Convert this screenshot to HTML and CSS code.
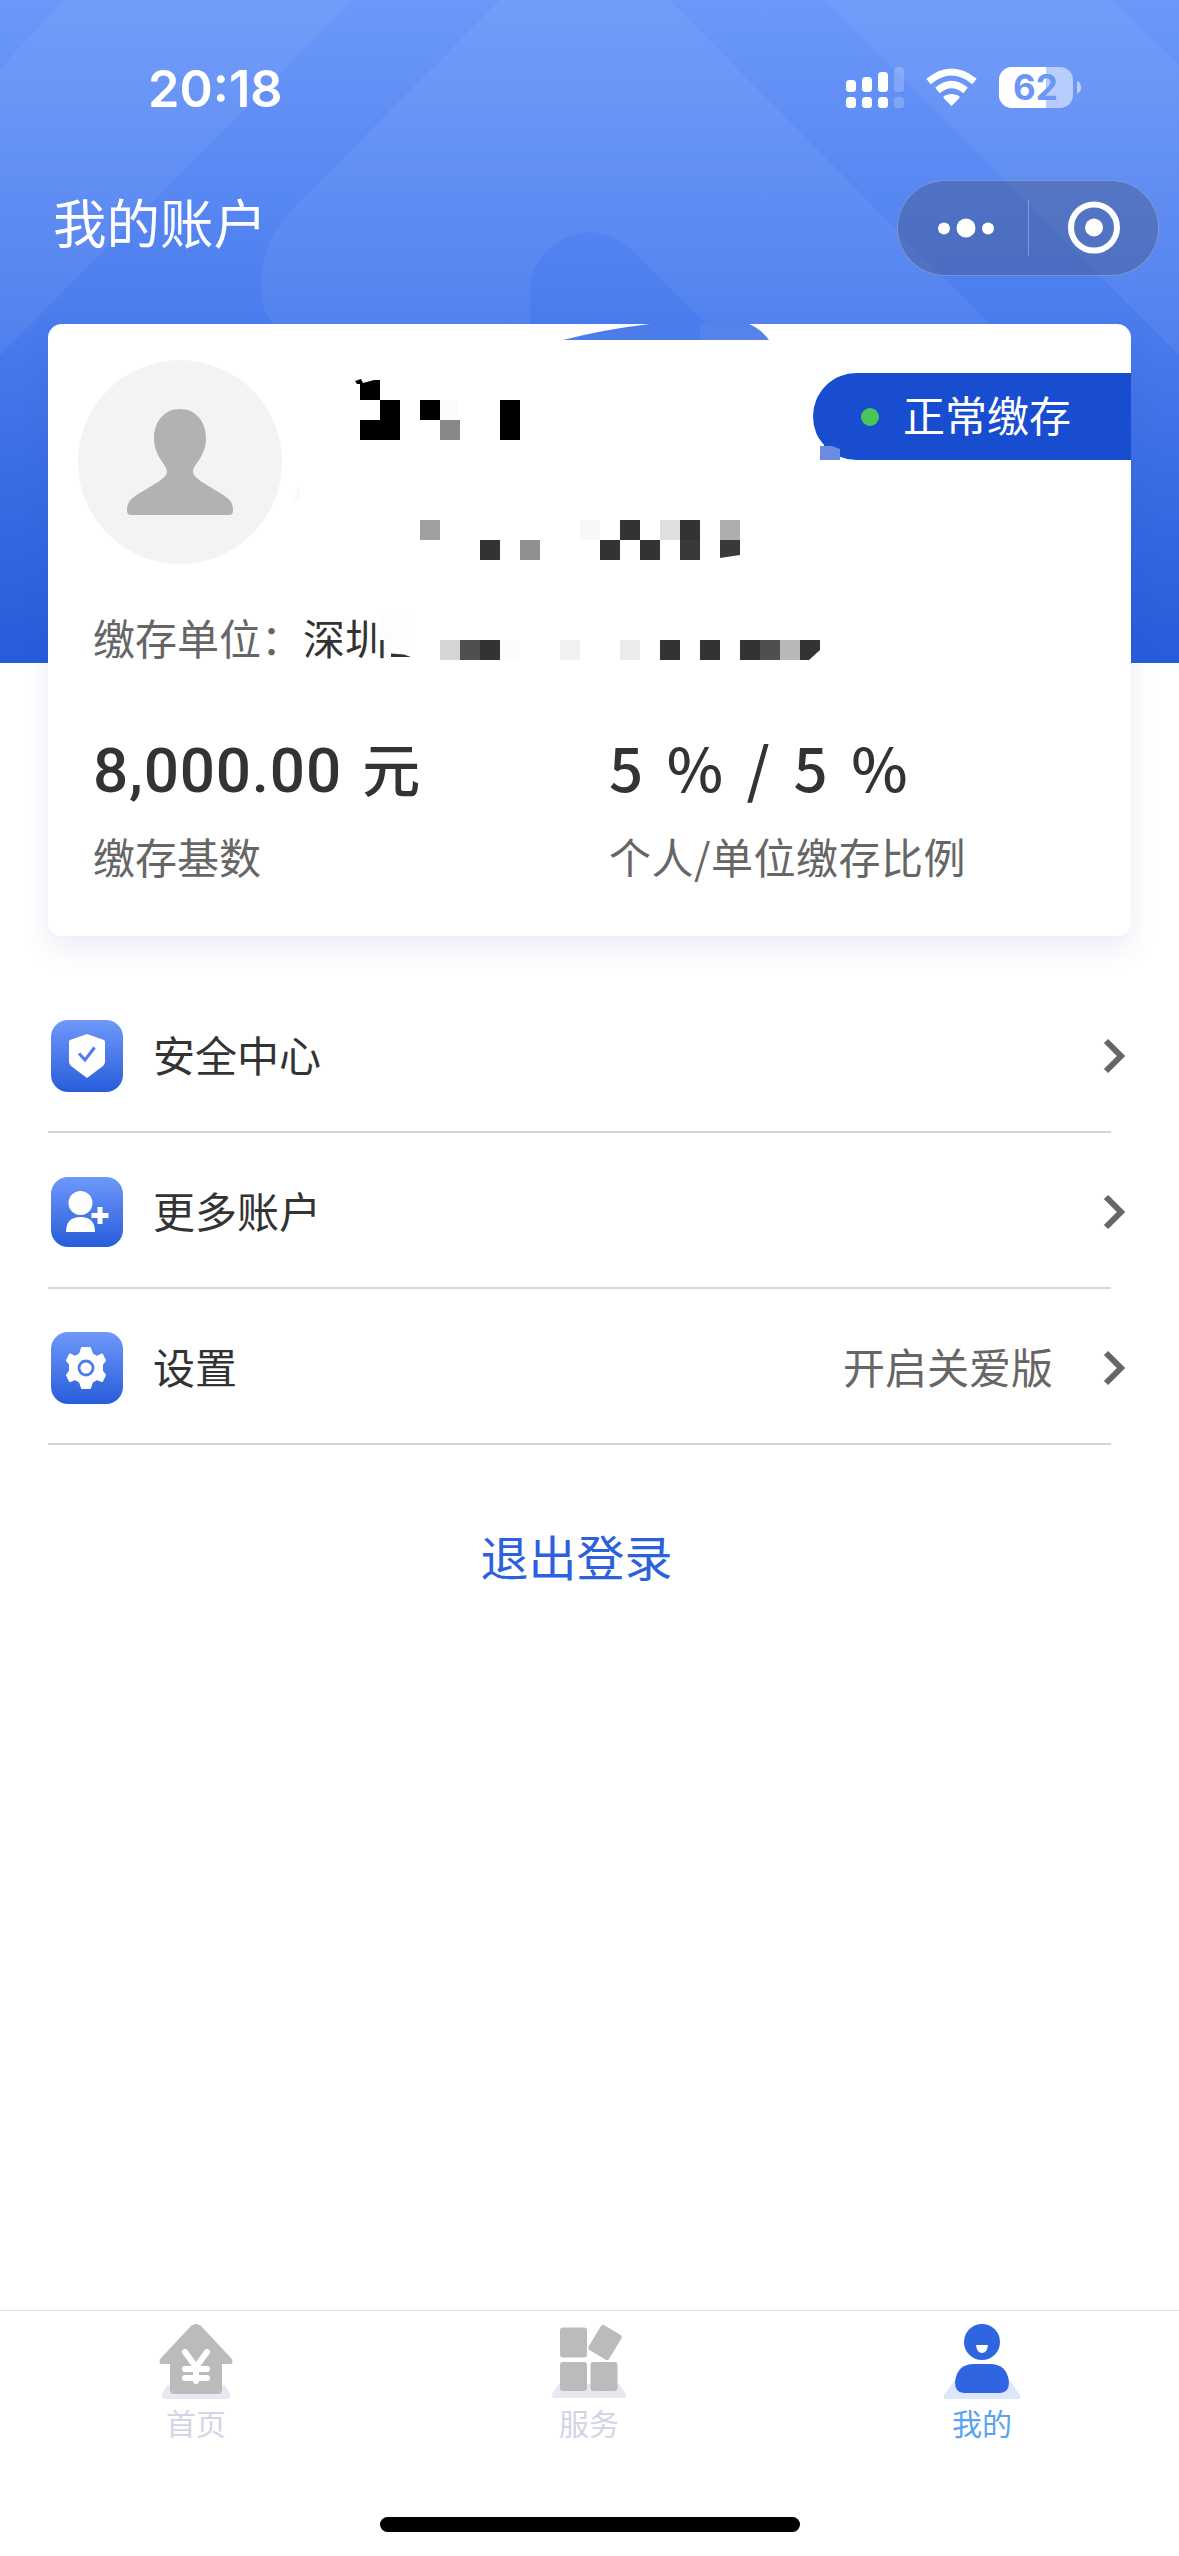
FILE: index.html
```html
<!DOCTYPE html>
<html lang="zh-CN">
<head>
<meta charset="utf-8">
<title>我的账户</title>
<link rel="stylesheet" href="styles.css">
</head>
<body>
<div class="page">
  <svg class="backdrop" viewBox="0 0 1179 663" aria-hidden="true">
    <defs>
      <linearGradient id="sky" x1="0" y1="0" x2="0" y2="1">
        <stop offset="0" stop-color="#6c98fa"/>
        <stop offset=".45" stop-color="#4c7eee"/>
        <stop offset="1" stop-color="#265bda"/>
      </linearGradient>
      <linearGradient id="sheen" gradientUnits="userSpaceOnUse" x1="0" y1="0" x2="0" y2="663">
        <stop offset="0" stop-color="#fff" stop-opacity=".05"/>
        <stop offset=".55" stop-color="#fff" stop-opacity=".055"/>
        <stop offset="1" stop-color="#fff" stop-opacity="0"/>
      </linearGradient>
    </defs>
    <rect width="1179" height="663" fill="url(#sky)"/>
    <g fill="url(#sheen)">
      <path d="M64 0H353L0 355V69Z"/>
      <path d="M500 0H669L992 326V400H706V323L632 250A60 60 0 0 0 530 285V400H272V323Q261 310 261 280Q264 235 298 203Z"/>
      <path d="M825 0H1112L1179 65V355Z"/>
    </g>
  </svg>

  <div class="statusbar">
    <div class="clock">20:18</div>
    <svg class="status-icons" viewBox="846 60 240 56" aria-hidden="true">
      <g fill="#fff">
        <rect x="846" y="80" width="10" height="12" rx="3.5"/><rect x="862" y="77" width="10" height="15" rx="3.5"/>
        <rect x="878" y="72" width="10" height="20" rx="3.5"/><rect x="894" y="67" width="10" height="25" rx="3.5" opacity=".2"/>
        <rect x="846" y="97" width="10" height="11" rx="3.5"/><rect x="862" y="97" width="10" height="11" rx="3.5"/>
        <rect x="878" y="97" width="10" height="11" rx="3.5"/><rect x="894" y="97" width="10" height="11" rx="3.5" opacity=".2"/>
        <path d="M951.500 106L944 98.500Q942.500 96.500 945 95.500Q951.500 92.500 958 95.500Q960.500 96.500 959 98.500Z"/>
      </g>
      <path d="M937.500 90.500Q951.500 78.500 965.500 90.500" fill="none" stroke="#fff" stroke-width="7"/>
      <path d="M928.500 81.500Q951.500 62.500 974.500 81.500" fill="none" stroke="#fff" stroke-width="7"/>
      <rect x="999" y="67" width="74" height="41" rx="13" fill="#fff" fill-opacity=".52"/>
      <path d="M1046 67H1012A13 13 0 0 0 999 80V95A13 13 0 0 0 1012 108H1046Z" fill="#fff"/>
      <path d="M1077 81Q1081 83 1081 87.500T1077 93.500Z" fill="#fff" fill-opacity=".55"/>
      <text class="charge" x="1035.500" y="100" text-anchor="middle">62</text>
    </svg>
  </div>

  <div class="navbar">
    <h1 class="title">我的账户</h1>
    <div class="capsule">
      <svg class="capsule-icon" viewBox="0 0 56 56" aria-hidden="true"><g fill="#fff"><circle cx="6" cy="28.500" r="6"/><circle cx="28" cy="28" r="9.500"/><circle cx="50" cy="28.500" r="6"/></g></svg>
      <span class="capsule-line"></span>
      <svg class="capsule-icon" viewBox="0 0 56 56" aria-hidden="true"><circle cx="28" cy="27.500" r="23" fill="none" stroke="#fff" stroke-width="6"/><circle cx="28" cy="27.500" r="9" fill="#fff"/></svg>
    </div>
  </div>

  <section class="card">
    <div class="card-top">
      <div class="avatar">
        <svg viewBox="0 0 204 204" aria-hidden="true"><path fill="#b2b2b2" d="M102 49C118 49 128 62 128 78C128 97 115 104 115 112C115 121 148 133 153 142Q155 145 155 149V151Q155 155 151 155H53Q49 155 49 151V149Q49 145 51 142C56 133 89 121 89 112C89 104 76 97 76 78C76 62 86 49 102 49Z"/></svg>
      </div>
      <div class="badge"><i class="dot"></i><span class="badge-text">正常缴存</span></div>
    </div>
    <div class="employer"><span class="muted">缴存单位：</span>深圳</div>
    <div class="stats">
      <div class="stat"><div class="value amount">8,000.00 <span class="unit">元</span></div><div class="muted">缴存基数</div></div>
      <div class="stat"><div class="value ratio">5 % / 5 %</div><div class="muted spaced">个人/单位缴存比例</div></div>
    </div>
    <svg class="mosaic" viewBox="48 324 1083 612" aria-hidden="true">
      <path fill="#4b7ce9" d="M563 340Q606 329 650 324H749Q761 329 769 340Z"/>
      <path fill="#fff" fill-opacity=".06" d="M700 324H749Q761 329 769 340H700Z"/>
      <path fill="#fff" d="M812 430L824 445H820V462H812Z"/>
      <path fill="#6a8be0" d="M820 446H832L840 449V460H820Z"/>
      <path d="M355 381L361 379L363 383L374 380H380V400H400V440H360V420H380V400H360V384L357 384Z"/>
      <path d="M420 400h20v20h-20zM500 400h20v40h-20z"/>
      <path fill="#888" d="M440 420h20v20h-20z"/>
      <path fill="#fbfbfb" d="M440 400h18v20h-18zM380 620h20v20h-20zM500 640h20v20h-20z"/>
      <path fill="#fafafb" d="M293 500L300 482V500Z"/>
      <path fill="#9f9f9f" d="M420 520h20v20h-20z"/>
      <path fill="#8f8f8f" d="M520 540h20v20h-20z"/>
      <path fill="#f7f7f7" d="M580 520h20v20h-20z"/>
      <path fill="#dfdfdf" d="M660 520h20v20h-20z"/>
      <path fill="#aeaeae" d="M720 520h20v20h-20z"/>
      <path fill="#333" d="M480 540h20v20h-20zM620 520h20v20h-20zM600 540h20v20h-20zM640 540h20v20h-20zM680 520h20v20h-20z"/>
      <path fill="#393939" d="M680 540h20v20h-20zM720 540h20v15l-20 3z"/>
      <path fill="#fdfdfd" d="M379 615H410V650L396 650L385 640L379 632Z"/>
      <path fill="#333" d="M391 653.500L404 654.500L411 657H391Z"/>
      <path fill="#d6d6d6" d="M440 640h20v20h-20z"/>
      <path fill="#4f4f4f" d="M460 640h20v20h-20zM760 640h20v20h-20z"/>
      <path fill="#333" d="M480 640h20v20h-20zM660 640h20v20h-20zM700 640h20v20h-20zM740 640h20v20h-20zM800 640h20v10l-11 10h-9z"/>
      <path fill="#f1f1f1" d="M560 640h20v20h-20z"/>
      <path fill="#ebebeb" d="M620 640h20v20h-20z"/>
      <path fill="#b8b8b8" d="M780 640h20v20h-20z"/>
    </svg>
  </section>

  <nav class="menu">
    <a class="row">
      <svg class="tile" viewBox="0 0 72 72" aria-hidden="true">
        <defs><linearGradient id="tile" x1="0" y1="0" x2="0" y2="1"><stop offset="0" stop-color="#6e99fa"/><stop offset="1" stop-color="#285cda"/></linearGradient></defs>
        <rect width="72" height="72" rx="17" fill="url(#tile)"/>
        <path fill="#fff" d="M36 14L53 20Q54 20.500 54 22V42Q54 44 52 46L36 58L20 46Q18 44 18 42V22Q18 20.500 19 20Z"/>
        <path fill="none" stroke="#4c7dec" stroke-width="3" d="M28 33.500L34 40L43.500 27.500"/>
      </svg>
      <span class="label">安全中心</span>
      <svg class="chevron" viewBox="0 0 22 36" aria-hidden="true"><path d="M3 3L18 18L3 33"/></svg>
    </a>
    <a class="row">
      <svg class="tile" viewBox="0 0 72 72" aria-hidden="true">
        <rect y="1" width="72" height="70" rx="17" fill="url(#tile)"/>
        <g fill="#fff"><circle cx="29.500" cy="27" r="12"/><path d="M15 56Q15 41 29.500 41T44 56Z"/><path d="M46.500 31h5v6h6v5h-6v6h-5v-6h-6v-5h6z"/></g>
      </svg>
      <span class="label">更多账户</span>
      <svg class="chevron" viewBox="0 0 22 36" aria-hidden="true"><path d="M3 3L18 18L3 33"/></svg>
    </a>
    <a class="row">
      <svg class="tile" viewBox="0 0 72 72" aria-hidden="true">
        <rect width="72" height="72" rx="17" fill="url(#tile)"/>
        <path fill="#fff" stroke="#fff" stroke-width="2" stroke-linejoin="round" d="M31 16H39L41 22L46 25L51 22.500L54 28.500L51 32V39L54 43L51 49L46 47L41 50L39 56H31L29 50L24 47L19 49L16 43L19 39V32L16 28.500L19 22.500L24 25L29 22Z"/>
        <circle cx="35" cy="36" r="7" fill="none" stroke="#4c7dec" stroke-width="2.800"/>
      </svg>
      <span class="label">设置</span>
      <span class="extra">开启关爱版</span>
      <svg class="chevron" viewBox="0 0 22 36" aria-hidden="true"><path d="M3 3L18 18L3 33"/></svg>
    </a>
  </nav>

  <a class="logout">退出登录</a>

  <footer class="tabbar">
    <a class="tab">
      <svg class="tab-icon" viewBox="0 0 76 76" aria-hidden="true">
        <path fill="#e8e8f0" d="M9 61H67L72 70Q73 75 69 75H7Q3 75 4 70Z"/>
        <path fill="#bbb" d="M33 2Q38 -2 43 2L73 34Q76 38 73 40H64V66Q64 70 60 70H16Q12 70 12 66V40H3Q0 38 3 34Z"/>
        <path fill="none" stroke="#fff" stroke-width="6" stroke-linecap="round" stroke-linejoin="round" d="M27 28L38 43L49 28M27 45H49M27 54H49M38 44V57"/>
      </svg>
      <span>首页</span>
    </a>
    <a class="tab">
      <svg class="tab-icon" viewBox="0 0 76 76" aria-hidden="true">
        <path fill="#e8e8f0" d="M8 60H68L75 70Q76 74 73 74H3Q0 74 1 70Z"/>
        <g fill="#bbb"><rect x="9" y="3.500" width="27" height="30" rx="3"/><rect x="9" y="38" width="27" height="29" rx="3"/><rect x="39.500" y="38" width="27" height="29" rx="3"/><rect x="42" y="4" width="24" height="29" rx="3" transform="rotate(31 54 18.500)"/></g>
      </svg>
      <span>服务</span>
    </a>
    <a class="tab active">
      <svg class="tab-icon" viewBox="0 0 76 76" aria-hidden="true">
        <path fill="#dce7fb" d="M10 57H66L76 71V75H0V71Z"/>
        <g fill="#2f65e1"><circle cx="38" cy="18" r="18"/><path d="M11 58Q13 40 30 40H46Q63 40 65 58Q65 69 56 69H20Q11 69 11 58Z"/></g>
        <path fill="#fff" d="M32 21H44Q43 29 38 29T32 21Z"/>
      </svg>
      <span>我的</span>
    </a>
  </footer>
  <div class="home-indicator"></div>
</div>
</body>
</html>
```
FILE: styles.css
```css
* { box-sizing: border-box; }

body {
  margin: 0;
  background: #fff;
  color: #333;
  font-family: "Noto Sans CJK SC", sans-serif;
  font-size: 42px;
  font-weight: 400;
}

.page {
  position: relative;
  display: flex;
  flex-direction: column;
  width: 1179px;
  height: 2556px;
  overflow: hidden;
}

.backdrop {
  position: absolute;
  inset: 0 0 auto 0;
  width: 1179px;
  height: 663px;
}

.statusbar,
.navbar,
.card { position: relative; }

.statusbar {
  display: flex;
  justify-content: space-between;
  align-items: center;
  height: 176px;
  padding: 0 93px 0 148px;
}

.clock {
  color: #fff;
  font-family: Inter, sans-serif;
  font-size: 50.500px;
  font-weight: 600;
}

.status-icons {
  width: 240px;
  height: 56px;
}

.charge {
  fill: #6b95f8;
  font-family: Inter, sans-serif;
  font-size: 35px;
  font-weight: 700;
}

.navbar {
  display: flex;
  justify-content: space-between;
  align-items: center;
  height: 104px;
  padding: 0 20px 0 53px;
}

.title {
  margin: 0;
  padding-bottom: 14px;
  color: #fff;
  font-size: 53.500px;
  font-weight: 400;
  line-height: 90px;
}

.capsule {
  display: flex;
  align-items: center;
  justify-content: space-between;
  width: 262px;
  height: 96px;
  padding: 0 36px 0 40px;
  border: 1px solid rgba(255, 255, 255, .25);
  border-radius: 48px;
  background: rgba(68, 84, 130, .42);
}

.capsule-icon {
  width: 56px;
  height: 56px;
}

.capsule-line {
  width: 1px;
  height: 56px;
  margin-right: 3px;
  background: rgba(255, 255, 255, .3);
}

.card {
  height: 612px;
  margin: 44px 48px 0;
  border-radius: 14px;
  background: #fff;
  box-shadow: 0 12px 28px rgba(60, 80, 160, .1);
}

.card-top {
  display: flex;
  justify-content: space-between;
  align-items: flex-start;
  height: 282px;
  padding: 36px 0 0 30px;
}

.avatar {
  width: 204px;
  height: 204px;
  border-radius: 50%;
  background: #f3f3f6;
}

.badge {
  display: flex;
  align-items: center;
  gap: 24px;
  width: 318px;
  height: 87px;
  margin-top: 13px;
  padding-left: 48px;
  border-radius: 44px 0 0 44px;
  background: #194dd0;
  color: #fff;
}

.badge-text { padding-bottom: 6px; }

.dot {
  width: 18px;
  height: 18px;
  border-radius: 50%;
  background: #4bc555;
}

.employer {
  height: 62px;
  padding-left: 45px;
  line-height: 62px;
}

.muted { color: #666; }

.stats {
  display: grid;
  grid-template-columns: 516px 1fr;
  padding: 62px 0 0 45px;
}

.value {
  height: 76px;
  font-size: 60px;
  font-weight: 500;
  line-height: 72px;
  white-space: nowrap;
}

.amount {
  font-family: Roboto, "Noto Sans CJK SC", sans-serif;
  font-size: 62px;
  line-height: 82px;
  letter-spacing: .8px;
  word-spacing: 4px;
}

.unit { font-size: 58px; }

.ratio { word-spacing: 10px; }

.stats .muted {
  margin-top: 19px;
  line-height: 62px;
}

.stats .spaced { letter-spacing: .5px; }

.mosaic {
  position: absolute;
  inset: 0;
  width: 1083px;
  height: 612px;
}

.menu {
  display: flex;
  flex-direction: column;
  margin: 42px 54px 0 48px;
}

.row {
  display: flex;
  align-items: center;
  height: 156px;
  padding-left: 3px;
  background: linear-gradient(#d6d6d6, #d6d6d6) 0 153px / 1063px 2px no-repeat;
}

.tile {
  width: 72px;
  height: 72px;
}

.label {
  margin-left: 30px;
  padding-bottom: 5px;
}

.extra {
  margin-left: auto;
  margin-right: 50px;
  padding-bottom: 5px;
  color: #666;
}

.chevron {
  width: 22px;
  height: 36px;
  margin-left: auto;
  fill: none;
  stroke: #666;
  stroke-width: 6px;
}

.extra + .chevron { margin-left: 0; }

.logout {
  margin-top: 73px;
  padding-right: 26px;
  color: #2b61dc;
  font-size: 48px;
  line-height: 72px;
  text-align: center;
}

.tabbar {
  display: grid;
  grid-template-columns: repeat(3, 1fr);
  height: 207px;
  margin-top: auto;
  border-top: 1px solid #e3e3e3;
}

.tab {
  display: flex;
  flex-direction: column;
  align-items: center;
  padding: 13px 1px 0 0;
  color: #d2d5e6;
  font-size: 30px;
  line-height: 44px;
}

.tab.active { color: #58a4ee; }

.tab-icon {
  width: 76px;
  height: 76px;
}

.home-indicator {
  align-self: center;
  width: 420px;
  height: 15px;
  margin-bottom: 24px;
  border-radius: 8px;
  background: #000;
}
```
